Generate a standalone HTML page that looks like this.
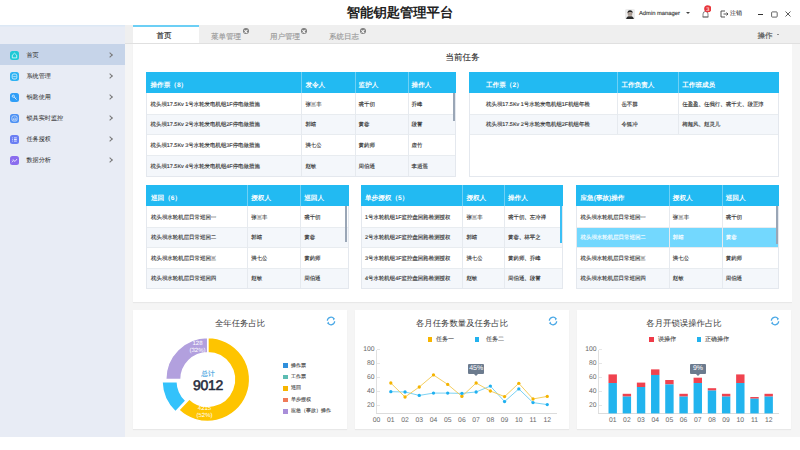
<!DOCTYPE html>
<html><head><meta charset="utf-8">
<style>
*{box-sizing:border-box;margin:0;padding:0}
html,body{width:800px;height:450px;overflow:hidden;background:#fff;font-family:"Liberation Sans",sans-serif;color:#333;text-rendering:geometricPrecision;-webkit-text-stroke-width:0.13px}
.abs{position:absolute}
#top{left:0;top:0;width:800px;height:25px;background:#fff}
#title{left:0;width:800px;top:5px;text-align:center;font-size:13.3px;font-weight:bold;color:#222;line-height:16px;-webkit-text-stroke-width:0}
#side{left:0;top:25px;width:125px;height:412px;background:#e8ecf5;box-shadow:inset 0 1.5px 0 #dce8f5}
.mi{position:absolute;left:0;width:125px;height:21px}
.mi.act{background:#c6d4e9}
.mi .ic{position:absolute;left:10px;top:6.5px;width:9px;height:9px;border-radius:2.5px}
.mi .tx{position:absolute;left:26.5px;top:7px;font-size:6.1px;line-height:9px;color:#3a3a3a;-webkit-text-stroke-width:0.05px}
.mi .ar{position:absolute;left:108px;top:5px;width:4px;height:4px;border-right:0.9px solid #777;border-top:0.9px solid #777;transform:rotate(45deg);top:9px}
#gray{left:125px;top:25px;width:675px;height:412px;background:#f5f5f5}
#tabbar{left:125px;top:25px;width:675px;height:19px;background:#efefef;border-bottom:1px solid #e0e0e0}
.tab{position:absolute;top:25px;height:19px;font-size:7.6px;line-height:19px;color:#999;text-align:center}
.tab.act{background:#fff;color:#333;border-top:2px solid #5cc6f2;line-height:16px}
.ttx{font-size:7px;line-height:9px;color:#999;text-align:center;white-space:nowrap}
.tx2{position:absolute;top:27.8px;width:6.4px;height:6.4px;border-radius:50%;background:#7d7d7d}
.tx2:before,.tx2:after{content:"";position:absolute;left:1.4px;top:2.8px;width:3.6px;height:0.8px;background:#fff;transform:rotate(45deg)}
.tx2:after{transform:rotate(-45deg)}
#panel{left:133px;top:44px;width:658.5px;height:258px;background:#fff;box-shadow:0 1px 1px rgba(0,0,0,.05)}
.tbl{position:absolute;background:#fff}
.bd{position:absolute;left:0;right:0;top:21px;bottom:0;border:1px solid #e4e8ee;border-top:none;pointer-events:none}
.th{position:absolute;left:0;top:0;height:21px;background:#22baf2;width:100%}
.th span,.tr span{position:absolute;top:0;line-height:21px;white-space:nowrap}
.th span{color:#fff;font-size:6.6px;font-weight:bold;top:3px;-webkit-text-stroke-width:0}
.tr{position:absolute;left:0;height:20.7px;width:100%;box-shadow:inset 0 1px 0 #e8ecf0}
.tr span{font-size:5.45px;color:#333;top:1.5px}
.tr.alt{background:#f4f7fb}
.tr.hl{background:#73d8fe}
.tr.hl span{color:#fff}
.vl{position:absolute;top:0;bottom:0;width:1px;background:#e6eaef}
.th .vl{background:#6fd0f5}
.sb{position:absolute;width:2.5px;background:#9aa6b6}
.card{position:absolute;top:310px;width:214px;height:119px;background:#fff;box-shadow:0 1px 1px rgba(0,0,0,.05)}
.ctitle{position:absolute;left:0;width:214px;top:7.4px;text-align:center;font-size:8.4px;line-height:12px;color:#3a3a3a;-webkit-text-stroke-width:0}
.refresh{position:absolute;left:193px;top:6px}
#scroll{left:791.5px;top:44px;width:8.5px;height:392.5px;background:#f5f5f5}
</style><style>
.lbl{text-align:center;font-size:6px;line-height:7px;color:#fff;-webkit-text-stroke-width:0}
.leg{font-size:6px;line-height:8px;color:#555;white-space:nowrap}
.axl{font-size:6.8px;line-height:8px;color:#6a6a6a;-webkit-text-stroke-width:0}
.tip{height:10.8px;background:#6c7b8e;color:#fff;font-size:7px;line-height:10.8px;text-align:center;border-radius:1px;-webkit-text-stroke-width:0}
.tiparr{width:0;height:0;border-left:2.2px solid transparent;border-right:2.2px solid transparent;border-top:2px solid #6c7b8e}
</style></head><body>
<div id="top" class="abs"></div>
<div id="title" class="abs">智能钥匙管理平台</div>

<!-- header right -->
<svg class="abs" style="left:625px;top:8.5px" width="10" height="10.5" viewBox="0 0 10 10.5"><rect width="10" height="10.5" rx="1.5" fill="#ececec"/><path d="M1 10.5 Q1.5 7 5 7 Q8.5 7 9 10.5 Z" fill="#2a2a2a"/><ellipse cx="5" cy="4.6" rx="2.4" ry="2.9" fill="#b9aaa0"/><path d="M2.5 4.2 Q2.4 1.2 5 1.2 Q7.8 1.2 7.6 4 Q6.5 2.6 4.6 3 Q3.2 3.3 2.5 4.2Z" fill="#222"/><path d="M3.4 5 H4.4 M5.6 5 H6.6" stroke="#333" stroke-width="0.5"/></svg>
<div class="abs" style="left:639px;top:10px;font-size:5.8px;line-height:9px;color:#333">Admin manager</div>
<div class="abs" style="left:686px;top:12px;width:0;height:0;border-left:2px solid transparent;border-right:2px solid transparent;border-top:2px solid #444"></div>
<svg class="abs" style="left:701px;top:10px" width="9" height="9" viewBox="0 0 9 9"><path d="M2 7 L2 4 Q2 1.5 4.5 1.5 Q7 1.5 7 4 L7 7 Z M1.5 7 H7.5" fill="none" stroke="#666" stroke-width="0.8"/></svg>
<svg class="abs" style="left:703.6px;top:5.1px" width="7.5" height="7.5" viewBox="0 0 7.5 7.5"><circle cx="3.75" cy="3.75" r="3.6" fill="#e8363b"/><text x="3.75" y="5.7" text-anchor="middle" font-size="5.5" fill="#fff" font-family="Liberation Sans" style="-webkit-text-stroke-width:0">3</text></svg>
<svg class="abs" style="left:719.6px;top:10px" width="9" height="8" viewBox="0 0 9 8"><path d="M5 1 H1 V7 H5 M3.5 4 H8 M6.5 2.5 L8 4 L6.5 5.5" fill="none" stroke="#444" stroke-width="0.9"/></svg>
<div class="abs" style="left:730px;top:10.2px;font-size:6px;line-height:9px;color:#222;-webkit-text-stroke-width:0.05px">注销</div>
<div class="abs" style="left:758px;top:13.5px;width:5px;height:1px;background:#333"></div>
<svg class="abs" style="left:771px;top:11px" width="7" height="7" viewBox="0 0 7 7"><rect x="0.6" y="0.9" width="5.6" height="5.2" rx="0.8" fill="none" stroke="#333" stroke-width="0.75"/></svg>
<svg class="abs" style="left:784.5px;top:11px" width="6" height="6" viewBox="0 0 6 6"><path d="M0.5 0.5 L5.5 5.5 M5.5 0.5 L0.5 5.5" stroke="#333" stroke-width="0.8"/></svg>

<!-- sidebar -->
<div id="side" class="abs">
  <div class="mi act" style="top:19px"><svg class="ic" viewBox="0 0 9 9" style="background:#1ec9d6"><path d="M2.3 4.2 L4.5 2.2 L6.7 4.2 V6.9 H2.3 Z" fill="none" stroke="#fff" stroke-width="0.7"/></svg><div class="tx">首页</div><div class="ar"></div></div>
  <div class="mi" style="top:40px"><svg class="ic" viewBox="0 0 9 9" style="background:#2eb2f3"><rect x="2.2" y="2" width="4.6" height="5" rx="1.6" fill="none" stroke="#fff" stroke-width="0.7"/><path d="M3.2 4.6 H5.8" stroke="#fff" stroke-width="0.6"/></svg><div class="tx">系统管理</div><div class="ar"></div></div>
  <div class="mi" style="top:61px"><svg class="ic" viewBox="0 0 9 9" style="background:#2f9ef7"><circle cx="3.3" cy="3.2" r="1.1" fill="none" stroke="#fff" stroke-width="0.7"/><path d="M4.1 4 L6.6 6.6 M5.4 5.3 L6.2 4.7" stroke="#fff" stroke-width="0.7"/></svg><div class="tx">钥匙使用</div><div class="ar"></div></div>
  <div class="mi" style="top:82px"><svg class="ic" viewBox="0 0 9 9" style="background:#4b90f4"><rect x="1.9" y="1.9" width="5.2" height="5.2" rx="1.5" fill="none" stroke="#fff" stroke-width="0.6"/><path d="M3 5.8 Q3 4.4 4.2 4.3 Q4.7 3.3 5.6 4.2 Q6.3 4.6 6 5.8 Z" fill="none" stroke="#fff" stroke-width="0.55"/></svg><div class="tx">锁具实时监控</div><div class="ar"></div></div>
  <div class="mi" style="top:103px"><svg class="ic" viewBox="0 0 9 9" style="background:#6a7ef3"><path d="M2.3 2.9 H3 M2.3 4.5 H3 M2.3 6.1 H3 M4 2.9 H6.8 M4 4.5 H6.8 M4 6.1 H6.8" stroke="#fff" stroke-width="0.8"/></svg><div class="tx">任务授权</div><div class="ar"></div></div>
  <div class="mi" style="top:124px"><svg class="ic" viewBox="0 0 9 9" style="background:#8a6cee"><path d="M1.9 6.3 L3.7 4.3 L5 5.5 L7 3" fill="none" stroke="#fff" stroke-width="0.75"/><path d="M2 4.6 L3.4 3.2" stroke="#fff" stroke-width="0.5"/></svg><div class="tx">数据分析</div><div class="ar"></div></div>
</div>

<div id="gray" class="abs"></div>
<div id="tabbar" class="abs"></div>
<div class="abs" style="left:133px;top:25px;width:66px;height:18px;background:#fff;border-top:2px solid #6ccff5"></div>
<div class="abs ttx" style="left:133px;width:62px;top:31px;color:#333;font-size:7.5px;-webkit-text-stroke-width:0.2px">首页</div>
<div class="abs ttx" style="left:206px;width:40px;top:31.5px;font-size:7.5px">菜单管理</div><div class="tx2" style="left:242.5px"></div>
<div class="abs ttx" style="left:265px;width:40px;top:31.5px;font-size:7.5px">用户管理</div><div class="tx2" style="left:301px"></div>
<div class="abs ttx" style="left:324px;width:40px;top:31.5px;font-size:7.5px">系统日志</div><div class="tx2" style="left:359.6px"></div>
<div class="abs" style="left:757.5px;top:30.7px;font-size:7.5px;line-height:10px;color:#555">操作</div>
<div class="abs" style="left:776.8px;top:34.4px;width:0;height:0;border-left:1.6px solid transparent;border-right:1.6px solid transparent;border-top:1.9px solid #333"></div>

<div id="panel" class="abs"></div>
<div id="scroll" class="abs"></div>
<div class="abs" style="left:133px;width:659px;top:51px;text-align:center;font-size:8.5px;line-height:12px;color:#333">当前任务</div>

<div class="tbl" style="left:146px;top:72px;width:310px;height:104.6px">
<div class="th"><span style="left:4.5px">操作票（8）</span><span style="left:159.4px">发令人</span><span style="left:212.6px">监护人</span><span style="left:265.6px">操作人</span><div class="vl" style="left:155.4px"></div><div class="vl" style="left:208.6px"></div><div class="vl" style="left:261.6px"></div></div>
<div class="tr" style="top:21.0px;height:20.7px;box-shadow:none"><span style="left:4.5px">枕头坝17.5Kv 1号水轮发电机组1F停电做措施</span><span style="left:159.4px">张三丰</span><span style="left:212.6px">裘千仞</span><span style="left:265.6px">乔峰</span><div class="vl" style="left:155.4px"></div><div class="vl" style="left:208.6px"></div><div class="vl" style="left:261.6px"></div></div>
<div class="tr alt" style="top:41.7px;height:20.7px"><span style="left:4.5px">枕头坝17.5Kv 2号水轮发电机组2F停电做措施</span><span style="left:159.4px">郭靖</span><span style="left:212.6px">黄蓉</span><span style="left:265.6px">段誉</span><div class="vl" style="left:155.4px"></div><div class="vl" style="left:208.6px"></div><div class="vl" style="left:261.6px"></div></div>
<div class="tr" style="top:62.4px;height:20.7px"><span style="left:4.5px">枕头坝17.5Kv 3号水轮发电机组3F停电做措施</span><span style="left:159.4px">洪七公</span><span style="left:212.6px">黄药师</span><span style="left:265.6px">虚竹</span><div class="vl" style="left:155.4px"></div><div class="vl" style="left:208.6px"></div><div class="vl" style="left:261.6px"></div></div>
<div class="tr alt" style="top:83.1px;height:20.7px"><span style="left:4.5px">枕头坝17.5Kv 4号水轮发电机组4F停电做措施</span><span style="left:159.4px">赵敏</span><span style="left:212.6px">周伯通</span><span style="left:265.6px">李逍遥</span><div class="vl" style="left:155.4px"></div><div class="vl" style="left:208.6px"></div><div class="vl" style="left:261.6px"></div></div>
<div class="sb" style="left:306.7px;top:21px;height:28px;background:#9aa6b6"></div>
<div class="bd"></div></div>
<div class="tbl" style="left:469px;top:72px;width:310px;height:104.6px">
<div class="th"><span style="left:17px">工作票（2）</span><span style="left:152.4px">工作负责人</span><span style="left:213.2px">工作班成员</span><div class="vl" style="left:148.4px"></div><div class="vl" style="left:209.2px"></div></div>
<div class="tr" style="top:21.0px;height:20.7px;box-shadow:none"><span style="left:17px">枕头坝17.5Kv 1号水轮发电机组1F机组年检</span><span style="left:152.4px">岳不群</span><span style="left:213.2px">任盈盈、任我行、裘千丈、段正淳</span><div class="vl" style="left:148.4px"></div><div class="vl" style="left:209.2px"></div></div>
<div class="tr alt" style="top:41.7px;height:20.7px"><span style="left:17px">枕头坝17.5Kv 2号水轮发电机组2F机组年检</span><span style="left:152.4px">令狐冲</span><span style="left:213.2px">梅超风、赵灵儿</span><div class="vl" style="left:148.4px"></div><div class="vl" style="left:209.2px"></div></div>
<div class="tr" style="top:62.4px;height:42.2px"></div>
<div class="bd"></div></div>
<div class="tbl" style="left:146px;top:185px;width:202.5px;height:103.6px">
<div class="th"><span style="left:5px">巡回（6）</span><span style="left:105.2px">授权人</span><span style="left:158.2px">巡回人</span><div class="vl" style="left:101.2px"></div><div class="vl" style="left:154.2px"></div></div>
<div class="tr" style="top:21.0px;height:20.6px;box-shadow:none"><span style="left:5px">枕头坝水轮机层日常巡回一</span><span style="left:105.2px">张三丰</span><span style="left:158.2px">裘千仞</span><div class="vl" style="left:101.2px"></div><div class="vl" style="left:154.2px"></div></div>
<div class="tr alt" style="top:41.6px;height:20.6px"><span style="left:5px">枕头坝水轮机层日常巡回二</span><span style="left:105.2px">郭靖</span><span style="left:158.2px">黄蓉</span><div class="vl" style="left:101.2px"></div><div class="vl" style="left:154.2px"></div></div>
<div class="tr" style="top:62.2px;height:20.6px"><span style="left:5px">枕头坝水轮机层日常巡回三</span><span style="left:105.2px">洪七公</span><span style="left:158.2px">黄药师</span><div class="vl" style="left:101.2px"></div><div class="vl" style="left:154.2px"></div></div>
<div class="tr alt" style="top:82.8px;height:20.6px"><span style="left:5px">枕头坝水轮机层日常巡回四</span><span style="left:105.2px">赵敏</span><span style="left:158.2px">周伯通</span><div class="vl" style="left:101.2px"></div><div class="vl" style="left:154.2px"></div></div>
<div class="sb" style="left:198.7px;top:21px;height:36px;background:#9aa6b6"></div>
<div class="bd"></div></div>
<div class="tbl" style="left:361px;top:185px;width:202px;height:103.6px">
<div class="th"><span style="left:4px">单步授权（5）</span><span style="left:105.4px">授权人</span><span style="left:147px">操作人</span><div class="vl" style="left:101.4px"></div><div class="vl" style="left:143px"></div></div>
<div class="tr" style="top:21.0px;height:20.6px;box-shadow:none"><span style="left:4px">1号水轮机组1F监控盘回路检测授权</span><span style="left:105.4px">张三丰</span><span style="left:147px">裘千仞、左冷禅</span><div class="vl" style="left:101.4px"></div><div class="vl" style="left:143px"></div></div>
<div class="tr alt" style="top:41.6px;height:20.6px"><span style="left:4px">2号水轮机组2F监控盘回路检测授权</span><span style="left:105.4px">郭靖</span><span style="left:147px">黄蓉、林平之</span><div class="vl" style="left:101.4px"></div><div class="vl" style="left:143px"></div></div>
<div class="tr" style="top:62.2px;height:20.6px"><span style="left:4px">3号水轮机组3F监控盘回路检测授权</span><span style="left:105.4px">洪七公</span><span style="left:147px">黄药师、乔峰</span><div class="vl" style="left:101.4px"></div><div class="vl" style="left:143px"></div></div>
<div class="tr alt" style="top:82.8px;height:20.6px"><span style="left:4px">4号水轮机组4F监控盘回路检测授权</span><span style="left:105.4px">赵敏</span><span style="left:147px">周伯通、段誉</span><div class="vl" style="left:101.4px"></div><div class="vl" style="left:143px"></div></div>
<div class="sb" style="left:199px;top:21px;height:37px;background:#3cc0f5"></div>
<div class="bd"></div></div>
<div class="tbl" style="left:576px;top:185px;width:202.6px;height:103.6px">
<div class="th"><span style="left:4.5px">应急(事故)操作</span><span style="left:96.8px">授权人</span><span style="left:149.7px">巡回人</span><div class="vl" style="left:92.8px"></div><div class="vl" style="left:145.7px"></div></div>
<div class="tr" style="top:21.0px;height:20.6px;box-shadow:none"><span style="left:4.5px">枕头坝水轮机层日常巡回一</span><span style="left:96.8px">张三丰</span><span style="left:149.7px">裘千仞</span><div class="vl" style="left:92.8px"></div><div class="vl" style="left:145.7px"></div></div>
<div class="tr hl" style="top:41.6px;height:20.6px"><span style="left:4.5px">枕头坝水轮机层日常巡回二</span><span style="left:96.8px">郭靖</span><span style="left:149.7px">黄蓉</span><div class="vl" style="left:92.8px"></div><div class="vl" style="left:145.7px"></div></div>
<div class="tr" style="top:62.2px;height:20.6px"><span style="left:4.5px">枕头坝水轮机层日常巡回三</span><span style="left:96.8px">洪七公</span><span style="left:149.7px">黄药师</span><div class="vl" style="left:92.8px"></div><div class="vl" style="left:145.7px"></div></div>
<div class="tr alt" style="top:82.8px;height:20.6px"><span style="left:4.5px">枕头坝水轮机层日常巡回四</span><span style="left:96.8px">赵敏</span><span style="left:149.7px">周伯通</span><div class="vl" style="left:92.8px"></div><div class="vl" style="left:145.7px"></div></div>
<div class="sb" style="left:199.5px;top:21px;height:38px;background:#9aa6b6"></div>
<div class="bd"></div></div>
<div class="card" style="left:133px"><div class="ctitle">全年任务占比</div><svg class="abs" style="left:192.5px;top:6.2px" width="10" height="10" viewBox="0 0 9 9"><path d="M1.2 4.3 A3.3 3.3 0 0 1 7.3 2.7 M7.8 4.7 A3.3 3.3 0 0 1 1.7 6.3" fill="none" stroke="#4aa8e6" stroke-width="1.1"/><path d="M6 1.4 L8.1 2.4 L6.7 4.1 Z M3 7.6 L0.9 6.6 L2.3 4.9 Z" fill="#4aa8e6"/></svg><svg class="abs" style="left:0;top:0" width="214" height="120"><path d="M74.70 27.50A42 42 0 1 1 45.79 99.97L56.32 88.87A26.7 26.7 0 1 0 74.70 42.80Z" fill="#fec400" stroke="#fff" stroke-width="1.5"/><path d="M42.36 101.91A43 43 0 0 1 28.97 71.85L44.27 71.45A27.7 27.7 0 0 0 52.89 90.81Z" fill="#33c2fb" stroke="#fff" stroke-width="1.5"/><path d="M32.70 69.50A42 42 0 0 1 74.70 27.50L74.70 42.80A26.7 26.7 0 0 0 48.00 69.50Z" fill="#b2a0de" stroke="#fff" stroke-width="1.5"/></svg><div class="abs lbl" style="left:50px;top:31px;width:29px">128<br>(32%)</div><div class="abs lbl" style="left:57px;top:96.3px;width:29px">4215<br>(52%)</div><div class="abs" style="left:55px;top:60.5px;width:40px;text-align:center;font-size:6.8px;line-height:8px;color:#3d9fe0">总计</div><div class="abs" style="left:45px;top:67.5px;width:60px;text-align:center;font-size:14px;line-height:15px;color:#262b3b;letter-spacing:-0.3px;-webkit-text-stroke-width:0.55px">9012</div><div class="abs" style="left:150px;top:53.2px;width:4.6px;height:4.6px;background:#2f8fdc"></div><div class="abs leg" style="left:158px;top:51.5px;font-size:5px">操作票</div><div class="abs" style="left:150px;top:64.6px;width:4.6px;height:4.6px;background:#5cbcb2"></div><div class="abs leg" style="left:158px;top:62.9px;font-size:5px">工作票</div><div class="abs" style="left:150px;top:76.1px;width:4.6px;height:4.6px;background:#f7b500"></div><div class="abs leg" style="left:158px;top:74.4px;font-size:5px">巡回</div><div class="abs" style="left:150px;top:87.6px;width:4.6px;height:4.6px;background:#f07a58"></div><div class="abs leg" style="left:158px;top:85.9px;font-size:5px">单步授权</div><div class="abs" style="left:150px;top:99.0px;width:4.6px;height:4.6px;background:#a98ed9"></div><div class="abs leg" style="left:158px;top:97.3px;font-size:5px">应急（事故）操作</div></div>
<div class="card" style="left:355px"><div class="ctitle">各月任务数量及任务占比</div><svg class="abs" style="left:192.5px;top:6.2px" width="10" height="10" viewBox="0 0 9 9"><path d="M1.2 4.3 A3.3 3.3 0 0 1 7.3 2.7 M7.8 4.7 A3.3 3.3 0 0 1 1.7 6.3" fill="none" stroke="#4aa8e6" stroke-width="1.1"/><path d="M6 1.4 L8.1 2.4 L6.7 4.1 Z M3 7.6 L0.9 6.6 L2.3 4.9 Z" fill="#4aa8e6"/></svg><div class="abs" style="left:72.6px;top:27.4px;width:4.2px;height:4.2px;background:#f7b500"></div><div class="abs leg" style="left:81px;top:25.5px">任务一</div><div class="abs" style="left:120px;top:27.4px;width:4.2px;height:4.2px;background:#22b2ee"></div><div class="abs leg" style="left:131px;top:25.5px">任务二</div><div class="abs axl" style="left:0;width:19.6px;text-align:right;top:36.1px">100</div><div class="abs" style="left:21.5px;top:38.7px;width:3px;height:0.6px;background:#e6e6e6"></div><div class="abs axl" style="left:0;width:19.6px;text-align:right;top:50.1px">80</div><div class="abs" style="left:21.5px;top:52.7px;width:3px;height:0.6px;background:#e6e6e6"></div><div class="abs axl" style="left:0;width:19.6px;text-align:right;top:64.1px">60</div><div class="abs" style="left:21.5px;top:66.7px;width:3px;height:0.6px;background:#e6e6e6"></div><div class="abs axl" style="left:0;width:19.6px;text-align:right;top:78.1px">40</div><div class="abs" style="left:21.5px;top:80.7px;width:3px;height:0.6px;background:#e6e6e6"></div><div class="abs axl" style="left:0;width:19.6px;text-align:right;top:92.1px">20</div><div class="abs" style="left:21.5px;top:94.7px;width:3px;height:0.6px;background:#e6e6e6"></div><div class="abs" style="left:21px;top:39.5px;width:0.8px;height:64.2px;background:#e0e0e0"></div><div class="abs" style="left:21px;top:103.2px;width:181px;height:0.9px;background:#dcdcdc"></div><div class="abs axl" style="left:11.6px;width:20px;text-align:center;top:106.6px">00</div><div class="abs axl" style="left:25.8px;width:20px;text-align:center;top:106.6px">01</div><div class="abs axl" style="left:40.0px;width:20px;text-align:center;top:106.6px">02</div><div class="abs axl" style="left:54.3px;width:20px;text-align:center;top:106.6px">03</div><div class="abs axl" style="left:68.5px;width:20px;text-align:center;top:106.6px">04</div><div class="abs axl" style="left:82.7px;width:20px;text-align:center;top:106.6px">05</div><div class="abs axl" style="left:96.9px;width:20px;text-align:center;top:106.6px">06</div><div class="abs axl" style="left:111.1px;width:20px;text-align:center;top:106.6px">07</div><div class="abs axl" style="left:125.4px;width:20px;text-align:center;top:106.6px">08</div><div class="abs axl" style="left:139.6px;width:20px;text-align:center;top:106.6px">09</div><div class="abs axl" style="left:153.8px;width:20px;text-align:center;top:106.6px">10</div><div class="abs axl" style="left:168.0px;width:20px;text-align:center;top:106.6px">11</div><div class="abs axl" style="left:182.2px;width:20px;text-align:center;top:106.6px">12</div><svg class="abs" style="left:0;top:0" width="214" height="120"><polyline points="35.82,81.70 50.04,81.98 64.26,85.41 78.48,83.10 92.70,83.10 106.92,83.38 121.14,81.98 135.36,76.10 149.58,91.57 163.80,78.90 178.02,92.62 192.24,94.58" fill="none" stroke="#6dcdf2" stroke-width="0.9"/><polyline points="35.82,73.02 50.04,87.02 64.26,77.01 78.48,64.97 92.70,74.42 106.92,86.39 121.14,73.02 135.36,81.00 149.58,86.60 163.80,73.30 178.02,88.98 192.24,86.39" fill="none" stroke="#f3c84e" stroke-width="0.9"/><circle cx="35.82" cy="73.02" r="1.65" fill="#f5b400"/><circle cx="50.04" cy="87.02" r="1.65" fill="#f5b400"/><circle cx="64.26" cy="77.01" r="1.65" fill="#f5b400"/><circle cx="78.48" cy="64.97" r="1.65" fill="#f5b400"/><circle cx="92.70" cy="74.42" r="1.65" fill="#f5b400"/><circle cx="106.92" cy="86.39" r="1.65" fill="#f5b400"/><circle cx="121.14" cy="73.02" r="1.65" fill="#f5b400"/><circle cx="135.36" cy="81.00" r="1.65" fill="#f5b400"/><circle cx="149.58" cy="86.60" r="1.65" fill="#f5b400"/><circle cx="163.80" cy="73.30" r="1.65" fill="#f5b400"/><circle cx="178.02" cy="88.98" r="1.65" fill="#f5b400"/><circle cx="192.24" cy="86.39" r="1.65" fill="#f5b400"/><circle cx="35.82" cy="81.70" r="1.65" fill="#1fb0f0"/><circle cx="50.04" cy="81.98" r="1.65" fill="#1fb0f0"/><circle cx="64.26" cy="85.41" r="1.65" fill="#1fb0f0"/><circle cx="78.48" cy="83.10" r="1.65" fill="#1fb0f0"/><circle cx="92.70" cy="83.10" r="1.65" fill="#1fb0f0"/><circle cx="106.92" cy="83.38" r="1.65" fill="#1fb0f0"/><circle cx="121.14" cy="81.98" r="1.65" fill="#1fb0f0"/><circle cx="135.36" cy="76.10" r="1.65" fill="#1fb0f0"/><circle cx="149.58" cy="91.57" r="1.65" fill="#1fb0f0"/><circle cx="163.80" cy="78.90" r="1.65" fill="#1fb0f0"/><circle cx="178.02" cy="92.62" r="1.65" fill="#1fb0f0"/><circle cx="192.24" cy="94.58" r="1.65" fill="#1fb0f0"/></svg><div class="abs tip" style="left:113px;top:53.6px;width:16.4px">45%</div><div class="abs tiparr" style="left:118.6px;top:64.4px"></div></div>
<div class="card" style="left:577px"><div class="ctitle">各月开锁误操作占比</div><svg class="abs" style="left:192.5px;top:6.2px" width="10" height="10" viewBox="0 0 9 9"><path d="M1.2 4.3 A3.3 3.3 0 0 1 7.3 2.7 M7.8 4.7 A3.3 3.3 0 0 1 1.7 6.3" fill="none" stroke="#4aa8e6" stroke-width="1.1"/><path d="M6 1.4 L8.1 2.4 L6.7 4.1 Z M3 7.6 L0.9 6.6 L2.3 4.9 Z" fill="#4aa8e6"/></svg><div class="abs" style="left:72.4px;top:27.4px;width:4.6px;height:4.6px;background:#ef3b48"></div><div class="abs leg" style="left:81px;top:25.5px">误操作</div><div class="abs" style="left:119.6px;top:27.4px;width:4.4px;height:4.4px;background:#22b2ee"></div><div class="abs leg" style="left:128px;top:25.5px">正确操作</div><div class="abs axl" style="left:0;width:19.6px;text-align:right;top:36.1px">100</div><div class="abs" style="left:21.5px;top:38.7px;width:3px;height:0.6px;background:#e6e6e6"></div><div class="abs axl" style="left:0;width:19.6px;text-align:right;top:50.1px">80</div><div class="abs" style="left:21.5px;top:52.7px;width:3px;height:0.6px;background:#e6e6e6"></div><div class="abs axl" style="left:0;width:19.6px;text-align:right;top:64.1px">60</div><div class="abs" style="left:21.5px;top:66.7px;width:3px;height:0.6px;background:#e6e6e6"></div><div class="abs axl" style="left:0;width:19.6px;text-align:right;top:78.1px">40</div><div class="abs" style="left:21.5px;top:80.7px;width:3px;height:0.6px;background:#e6e6e6"></div><div class="abs axl" style="left:0;width:19.6px;text-align:right;top:92.1px">20</div><div class="abs" style="left:21.5px;top:94.7px;width:3px;height:0.6px;background:#e6e6e6"></div><div class="abs" style="left:21px;top:39.5px;width:0.8px;height:64.2px;background:#e0e0e0"></div><div class="abs" style="left:21px;top:103.2px;width:181px;height:0.9px;background:#dcdcdc"></div><div class="abs axl" style="left:25.7px;width:20px;text-align:center;top:106.6px">01</div><div class="abs axl" style="left:39.9px;width:20px;text-align:center;top:106.6px">02</div><div class="abs axl" style="left:54.1px;width:20px;text-align:center;top:106.6px">03</div><div class="abs axl" style="left:68.2px;width:20px;text-align:center;top:106.6px">04</div><div class="abs axl" style="left:82.4px;width:20px;text-align:center;top:106.6px">05</div><div class="abs axl" style="left:96.6px;width:20px;text-align:center;top:106.6px">06</div><div class="abs axl" style="left:110.8px;width:20px;text-align:center;top:106.6px">07</div><div class="abs axl" style="left:125.0px;width:20px;text-align:center;top:106.6px">08</div><div class="abs axl" style="left:139.1px;width:20px;text-align:center;top:106.6px">09</div><div class="abs axl" style="left:153.3px;width:20px;text-align:center;top:106.6px">10</div><div class="abs axl" style="left:167.5px;width:20px;text-align:center;top:106.6px">11</div><div class="abs axl" style="left:181.7px;width:20px;text-align:center;top:106.6px">12</div><svg class="abs" style="left:0;top:0" width="214" height="120"><rect x="31.50" y="64.41" width="8.4" height="8.61" fill="#f0434f"/><rect x="31.50" y="73.02" width="8.4" height="30.38" fill="#22b4ee"/><rect x="45.68" y="83.80" width="8.4" height="2.80" fill="#f0434f"/><rect x="45.68" y="86.60" width="8.4" height="16.80" fill="#22b4ee"/><rect x="59.86" y="72.60" width="8.4" height="4.41" fill="#f0434f"/><rect x="59.86" y="77.01" width="8.4" height="26.39" fill="#22b4ee"/><rect x="74.04" y="59.37" width="8.4" height="5.60" fill="#f0434f"/><rect x="74.04" y="64.97" width="8.4" height="38.43" fill="#22b4ee"/><rect x="88.22" y="70.01" width="8.4" height="4.41" fill="#f0434f"/><rect x="88.22" y="74.42" width="8.4" height="28.98" fill="#22b4ee"/><rect x="102.40" y="83.80" width="8.4" height="2.80" fill="#f0434f"/><rect x="102.40" y="86.60" width="8.4" height="16.80" fill="#22b4ee"/><rect x="116.58" y="67.70" width="8.4" height="5.32" fill="#f0434f"/><rect x="116.58" y="73.02" width="8.4" height="30.38" fill="#22b4ee"/><rect x="130.76" y="78.20" width="8.4" height="2.38" fill="#f0434f"/><rect x="130.76" y="80.58" width="8.4" height="22.82" fill="#22b4ee"/><rect x="144.94" y="83.80" width="8.4" height="2.80" fill="#f0434f"/><rect x="144.94" y="86.60" width="8.4" height="16.80" fill="#22b4ee"/><rect x="159.12" y="64.41" width="8.4" height="8.61" fill="#f0434f"/><rect x="159.12" y="73.02" width="8.4" height="30.38" fill="#22b4ee"/><rect x="173.30" y="87.02" width="8.4" height="1.68" fill="#f0434f"/><rect x="173.30" y="88.70" width="8.4" height="14.70" fill="#22b4ee"/><rect x="187.48" y="83.80" width="8.4" height="2.80" fill="#f0434f"/><rect x="187.48" y="86.60" width="8.4" height="16.80" fill="#22b4ee"/></svg><div class="abs tip" style="left:113px;top:53.6px;width:16px">9%</div><div class="abs tiparr" style="left:118.6px;top:64.4px"></div></div>
<div class="abs" style="left:0;top:436.5px;width:800px;height:14px;background:#fff"></div>
</body></html>
